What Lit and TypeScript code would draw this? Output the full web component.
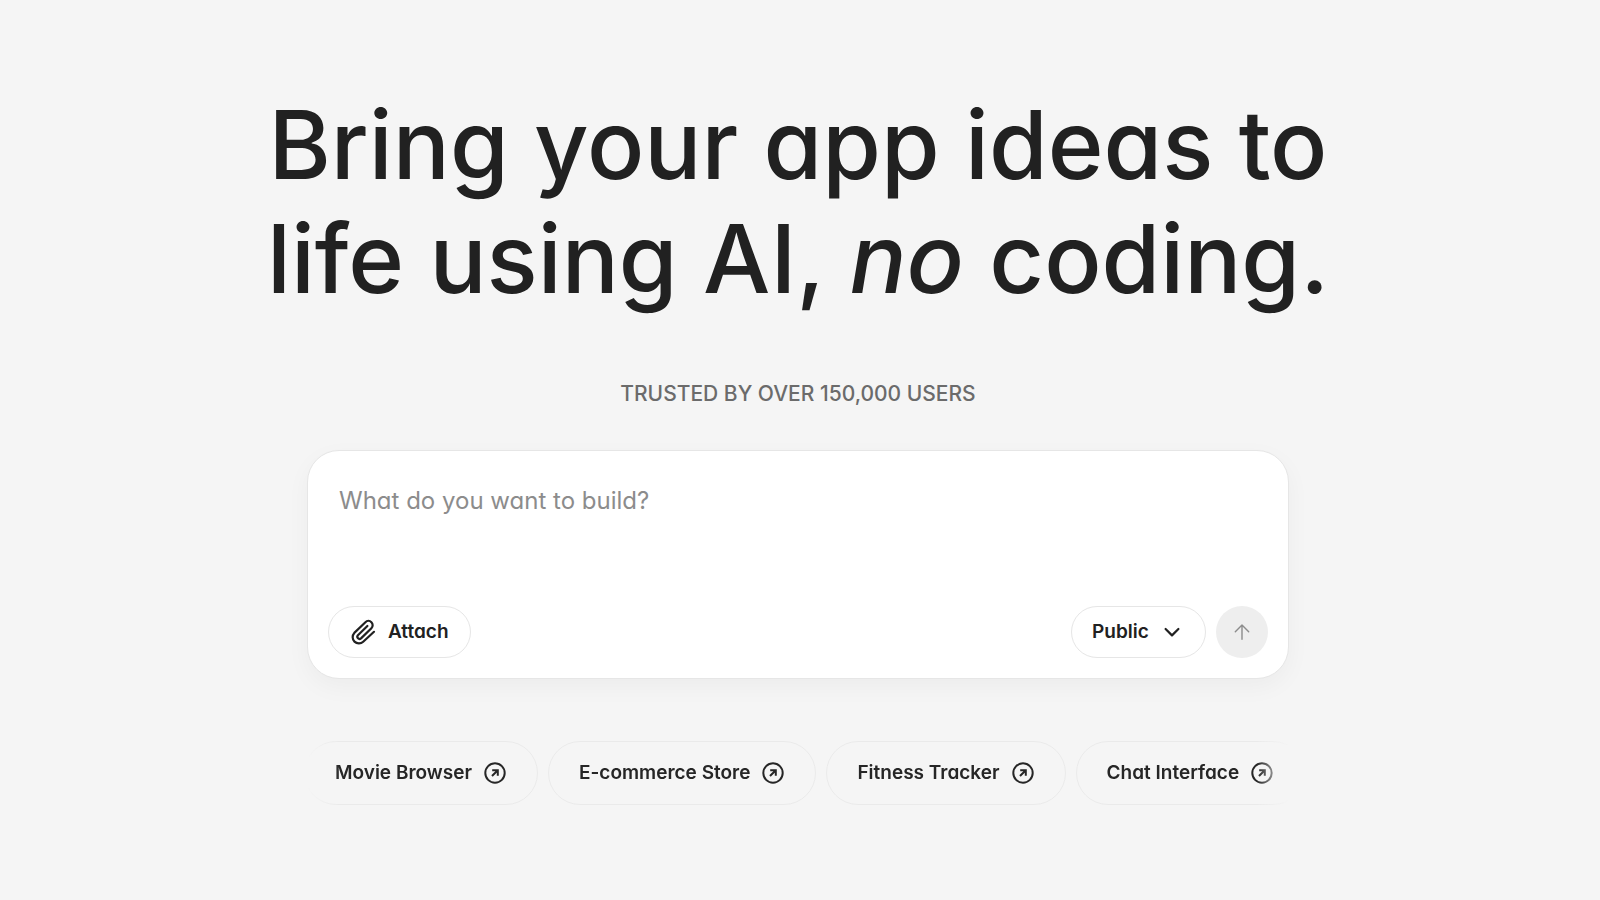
import { LitElement, html, css } from "lit";
import { customElement, property } from "lit/decorators.js";

@customElement("idea-chip")
export class IdeaChip extends LitElement {
  @property() label = "";

  static styles = css`
    :host {
      display: block;
      flex: none;
    }
    .chip {
      display: flex;
      align-items: center;
      gap: 11px;
      height: 64px;
      box-sizing: border-box;
      padding: 0 30px;
      border: 1px solid #eaeaea;
      border-radius: 32px;
      color: #262626;
      font: 600 19px/24px Inter, "Liberation Sans", sans-serif;
      font-feature-settings: "cv11";
      text-decoration: none;
      white-space: nowrap;
    }
    .icon {
      width: 24px;
      height: 24px;
    }
  `;

  render() {
    return html`<a class="chip" href="#">
      ${this.label}
      <svg class="icon" viewBox="0 0 24 24" fill="none" stroke="currentColor" stroke-width="2" aria-hidden="true">
        <circle cx="12" cy="12" r="9.7" />
        <path d="M9.2 9.2h5.6v5.6M14.8 9.2l-5.8 5.8" />
      </svg>
    </a>`;
  }
}

@customElement("app-root")
export class AppRoot extends LitElement {
  private ideas = ["Movie Browser", "E-commerce Store", "Fitness Tracker", "Chat Interface"];

  static styles = css`
    :host {
      display: block;
      min-height: 100vh;
      background: #f5f5f5;
      color: #212121;
      font-family: Inter, "Liberation Sans", sans-serif;
      font-feature-settings: "cv11";
    }
    .hero {
      display: flex;
      flex-direction: column;
      align-items: center;
      padding: 88px 28px 48px 24px;
    }
    .title {
      margin: 0;
      font-size: 95px;
      line-height: 114px;
      font-weight: 500;
      text-align: center;
    }
    .trusted {
      margin: 64px 0 0;
      font-size: 21px;
      line-height: 28px;
      font-weight: 500;
      color: #6b6b6b;
      text-transform: uppercase;
    }
    .prompt {
      display: flex;
      flex-direction: column;
      width: 100%;
      max-width: 982px;
      box-sizing: border-box;
      margin-top: 42px;
      padding: 20px;
      border: 1px solid #e6e6e6;
      border-radius: 32px;
      background: #fff;
      box-shadow: 0 8px 24px rgba(0, 0, 0, 0.04);
    }
    .input {
      height: 135px;
      box-sizing: border-box;
      padding: 14px 11px;
      border: 0;
      outline: 0;
      resize: none;
      background: none;
      color: inherit;
      font: 400 24px/32px Inter, "Liberation Sans", sans-serif;
      font-feature-settings: inherit;
    }
    .input::placeholder {
      color: #8c8c8c;
      opacity: 1;
    }
    .actions {
      display: flex;
      align-items: center;
      gap: 10px;
    }
    .pill {
      height: 52px;
      box-sizing: border-box;
      border: 1px solid #e6e6e6;
      border-radius: 26px;
      background: #fff;
      color: #212121;
      font: 600 19px/24px Inter, "Liberation Sans", sans-serif;
      font-feature-settings: inherit;
    }
    .attach {
      display: flex;
      align-items: center;
      gap: 10px;
      margin-right: auto;
      padding: 0 21px;
    }
    .icon {
      width: 28px;
      height: 28px;
    }
    .visibility {
      display: grid;
      align-items: center;
    }
    .select {
      grid-area: 1 / 1;
      appearance: none;
      padding: 0 56px 0 20px;
    }
    .chevron {
      grid-area: 1 / 1;
      justify-self: end;
      width: 24px;
      height: 24px;
      margin-right: 22px;
      pointer-events: none;
    }
    .send {
      display: grid;
      place-items: center;
      width: 52px;
      height: 52px;
      padding: 0;
      border: 0;
      border-radius: 50%;
      background: #eee;
      color: #8c8c8c;
    }
    .ideas {
      width: 100%;
      max-width: 982px;
      margin-top: 62px;
      overflow: hidden;
      mask-image: linear-gradient(to right, transparent, #000 32px, #000 calc(100% - 32px), transparent);
    }
    .track {
      display: flex;
      gap: 10px;
      margin-left: -3px;
    }
  `;

  render() {
    return html`
      <main class="hero">
        <h1 class="title">Bring your app ideas to<br />life using AI, <em>no</em> coding.</h1>
        <p class="trusted">Trusted by over 150,000 users</p>
        <form class="prompt" @submit=${(e: Event) => e.preventDefault()}>
          <textarea class="input" aria-label="What do you want to build?" placeholder="What do you want to build?"></textarea>
          <div class="actions">
            <button class="pill attach" type="button">
              <svg class="icon" viewBox="2 0 28 28" fill="none" stroke="currentColor" stroke-width="2.2" stroke-linecap="round" stroke-linejoin="round" aria-hidden="true">
                <path d="M26 13.8 15.2 23.8a6.3 6.3 0 0 1-8.9-8.9L17.4 4.2a4.2 4.2 0 0 1 6 6L13 20.4a2.2 2.2 0 0 1-3.1-3.1L19.4 8" />
              </svg>
              Attach
            </button>
            <div class="visibility">
              <select class="pill select" aria-label="Visibility">
                <option>Public</option>
              </select>
              <svg class="chevron" viewBox="0 0 24 24" fill="none" stroke="currentColor" stroke-width="2.2" stroke-linecap="round" stroke-linejoin="round" aria-hidden="true">
                <path d="m5.6 9 6.4 6.4L18.4 9" />
              </svg>
            </div>
            <button class="send" type="submit" aria-label="Send" disabled>
              <svg class="icon" viewBox="0 0 28 28" fill="none" stroke="currentColor" stroke-width="1.4" stroke-linecap="round" stroke-linejoin="round" aria-hidden="true">
                <path d="M14 21.2V7M7.3 13.7 14 7l6.7 6.7" />
              </svg>
            </button>
          </div>
        </form>
        <nav class="ideas" aria-label="Ideas">
          <div class="track">
            ${this.ideas.map((label) => html`<idea-chip .label=${label}></idea-chip>`)}
          </div>
        </nav>
      </main>
    `;
  }
}
